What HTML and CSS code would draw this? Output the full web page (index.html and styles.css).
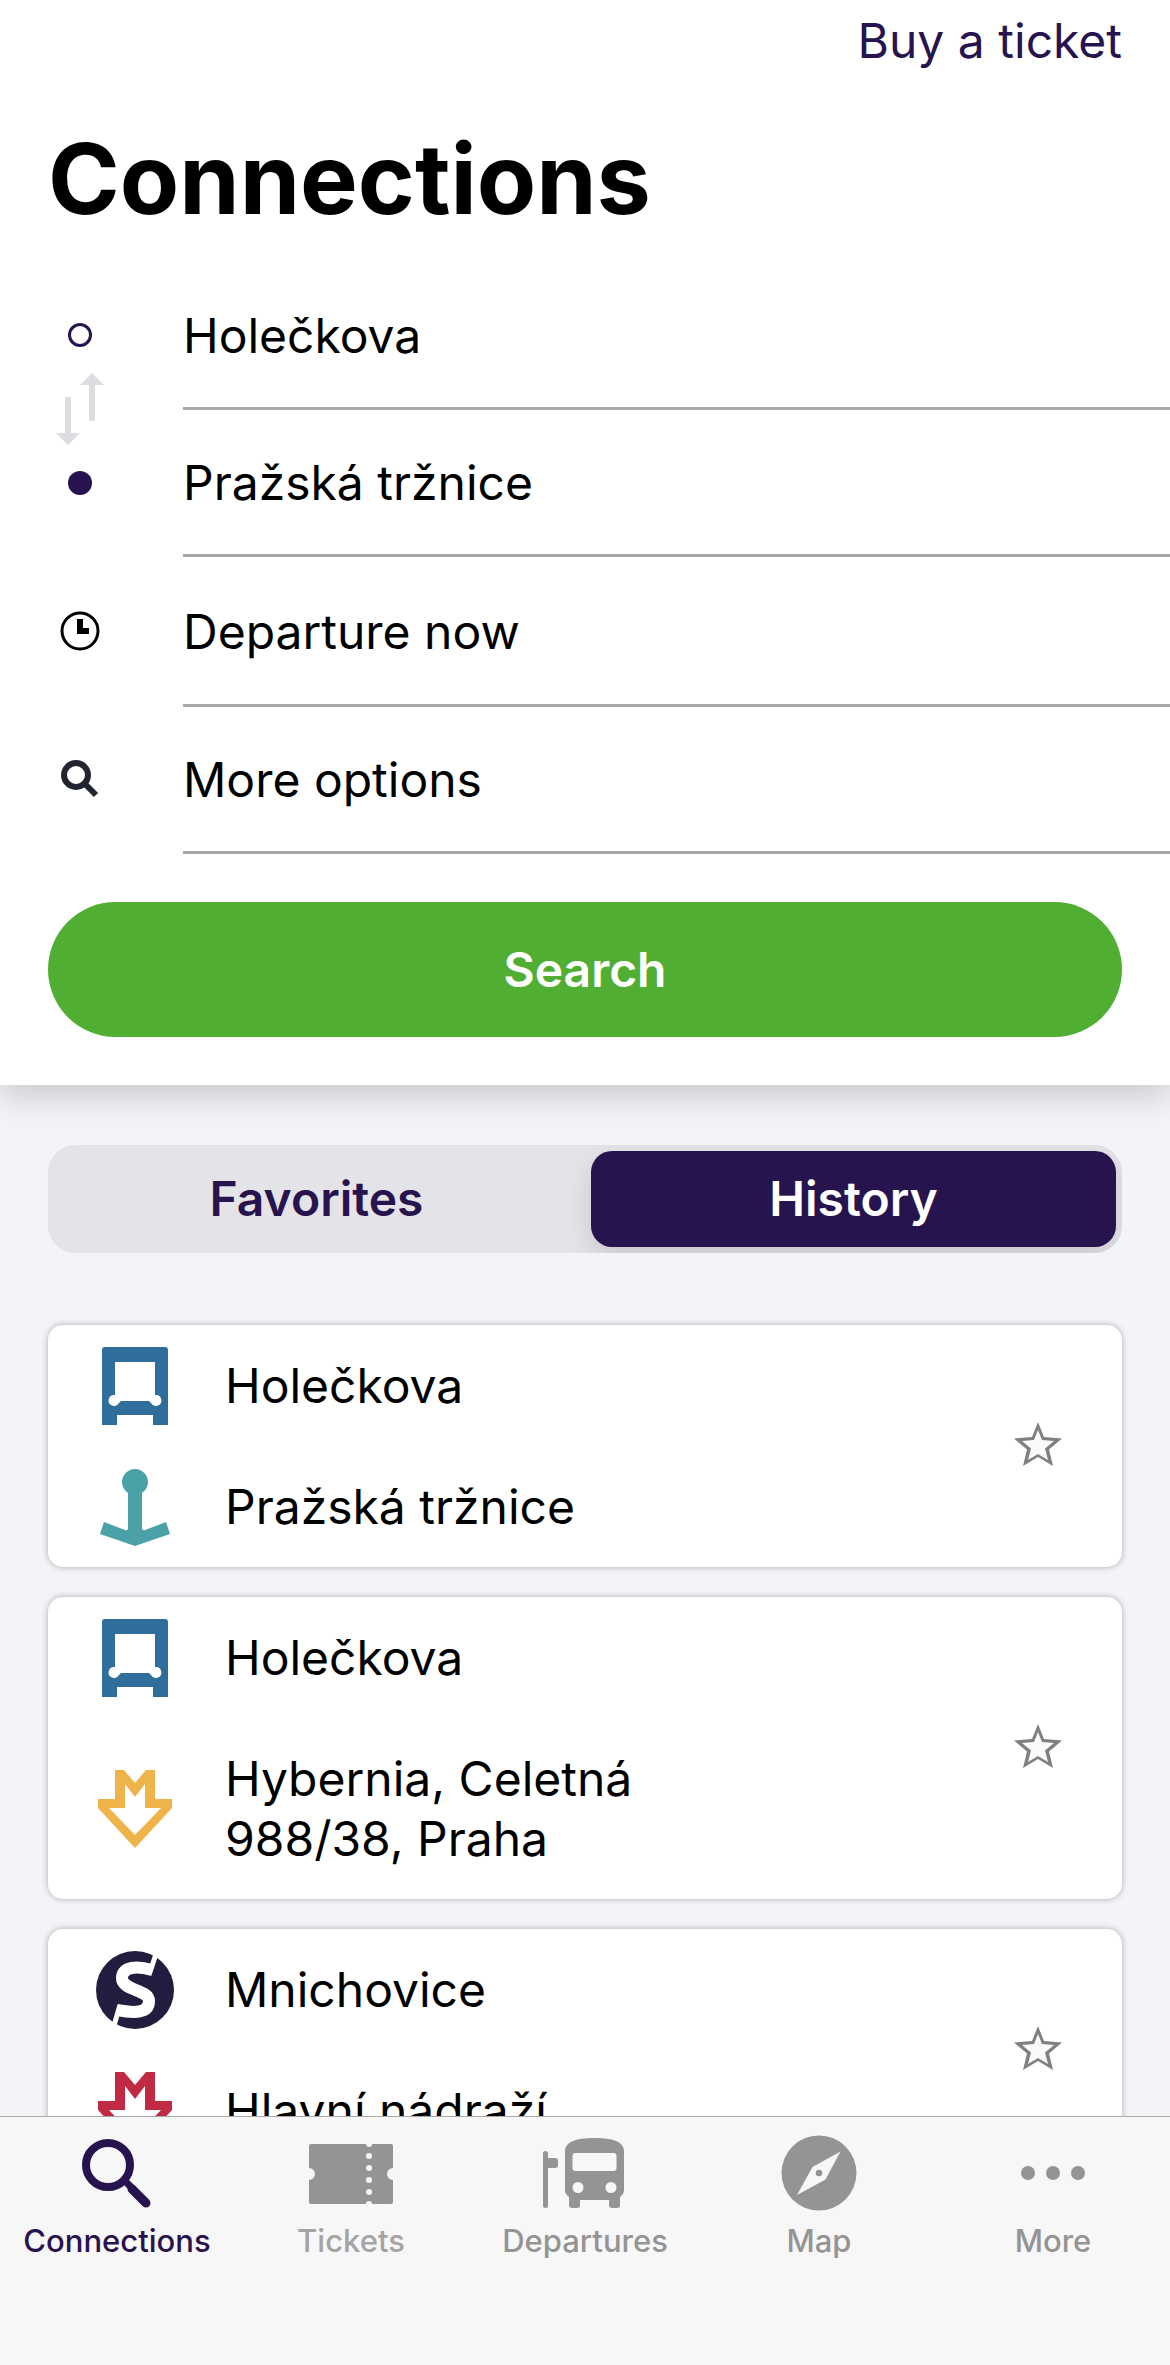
FILE: index.html
```html
<!DOCTYPE html>
<html lang="en">
<head>
  <meta charset="UTF-8">
  <meta name="viewport" content="width=device-width, initial-scale=1">
  <title>Connections</title>
  <link rel="stylesheet" href="styles.css">
</head>
<body>
  <svg class="sprite" aria-hidden="true">
    <symbol id="tram" viewBox="0 0 78 78">
      <path fill="#2f6e9b" fill-rule="evenodd" d="M9 0H69Q72 0 72 3V78H57V68H21V78H6V3Q6 0 9 0ZM19 15V48A5.500 5.500 0 1 0 23 56L25 54H53L55 56A5.500 5.500 0 1 0 59 48V15Z"/>
    </symbol>
    <symbol id="ferry" viewBox="0 0 78 78">
      <path fill="#4aa2a8" d="M32 25A13 13 0 1 1 46 25V60Q46 63 49 62L70 54L74 66L39 78L4 66L8 54L29 62Q32 63 32 60Z"/>
    </symbol>
    <symbol id="metro" viewBox="0 0 78 78">
      <path fill="currentColor" fill-rule="evenodd" d="M19 0H28L39 13L50 0H59V29H76V38L39 78L2 38V29H19ZM29 14V38H13L39 65L65 38H49V14L39 27Z"/>
    </symbol>
    <symbol id="star" viewBox="0 0 48 48">
      <path fill="#808080" d="M24 0L30 15L48 16.500L35 27.500L39 44L24 35L9 44L13 27.500L0 16.500L18 15Z"/>
      <path fill="#fafafa" d="M24 8L20 18L8 19L17 26.500L14 38L24 32L34 38L31 26.500L40 19L28 18Z"/>
    </symbol>
  </svg>

  <main class="content">
    <section class="planner">
      <header class="top">
        <a class="buy" href="#tickets">Buy a ticket</a>
      </header>
      <h1>Connections</h1>

      <div class="fields">
        <div class="marks">
          <svg class="dot" viewBox="0 0 24 24"><circle cx="12" cy="12" r="10.500" fill="none" stroke="#27134e" stroke-width="3"/></svg>
          <button class="swap" type="button" aria-label="Swap stops">
            <svg viewBox="0 0 48 72"><path fill="#dddde1" d="M36 0L48 12H39V48H33V12H24ZM9 24H15V60H24L12 72L0 60H9Z"/></svg>
          </button>
          <svg class="dot" viewBox="0 0 24 24"><circle cx="12" cy="12" r="12" fill="#27134e"/></svg>
        </div>
        <button class="field" type="button">Holečkova</button>
        <button class="field" type="button">Pražská tržnice</button>
        <svg class="mark" viewBox="0 0 40 40"><circle cx="20" cy="20" r="18" fill="none" stroke="#000" stroke-width="3"/><path d="M17 8H23V17H29V23H17Z"/></svg>
        <button class="field time" type="button">Departure now</button>
        <svg class="mark" viewBox="0 0 40 40"><circle cx="16" cy="16" r="12" fill="none" stroke="#222430" stroke-width="6"/><path stroke="#222430" stroke-width="6" d="M24 24L36 36"/></svg>
        <button class="field" type="button">More options</button>
      </div>

      <button class="search" type="button">Search</button>
    </section>

    <div class="segments">
      <button class="segment" type="button">Favorites</button>
      <button class="segment active" type="button">History</button>
    </div>

    <ul class="history">
      <li class="card">
        <div class="stops">
          <p class="stop"><svg><use href="#tram"/></svg>Holečkova</p>
          <p class="stop"><svg><use href="#ferry"/></svg>Pražská tržnice</p>
        </div>
        <button class="fav" type="button" aria-label="Add to favorites"><svg><use href="#star"/></svg></button>
      </li>
      <li class="card">
        <div class="stops">
          <p class="stop"><svg><use href="#tram"/></svg>Holečkova</p>
          <p class="stop line-b"><svg><use href="#metro"/></svg><span>Hybernia, Celetná<br>988/38, Praha</span></p>
        </div>
        <button class="fav" type="button" aria-label="Add to favorites"><svg><use href="#star"/></svg></button>
      </li>
      <li class="card">
        <div class="stops">
          <p class="stop">
            <svg viewBox="0 0 78 78">
              <circle cx="39" cy="39" r="39" fill="#221c3f"/>
              <path fill="none" stroke="#fff" stroke-width="12" d="M56 19C42 15 26 15 26 27C26 40 53 38 53 50C53 63 37 62 21 59"/>
              <path stroke="#fff" stroke-width="5" d="M61 0L53 24M24 54L17 78"/>
            </svg>
            Mnichovice
          </p>
          <p class="stop line-c"><svg><use href="#metro"/></svg>Hlavní nádraží</p>
        </div>
        <button class="fav" type="button" aria-label="Add to favorites"><svg><use href="#star"/></svg></button>
      </li>
    </ul>
  </main>

  <nav class="tabs">
    <a class="tab active" href="#connections">
      <svg viewBox="0 0 84 76"><circle cx="33" cy="30" r="22" fill="none" stroke="currentColor" stroke-width="8"/><path stroke="currentColor" stroke-width="7" d="M50 46L58 54"/><path stroke="currentColor" stroke-width="9" stroke-linecap="round" d="M57 54L71 68"/></svg>
      <span>Connections</span>
    </a>
    <a class="tab" href="#tickets">
      <svg viewBox="0 0 84 76">
        <path fill="currentColor" d="M2 9H57A3 3 0 0 0 63 9H82Q84 9 84 11V33A6 6 0 0 0 84 45V67Q84 69 82 69H63A3 3 0 0 0 57 69H2Q0 69 0 67V45A6 6 0 0 0 0 33V11Q0 9 2 9Z"/>
        <g fill="#f7f7f7"><circle cx="60" cy="21" r="3"/><circle cx="60" cy="33" r="3"/><circle cx="60" cy="45" r="3"/><circle cx="60" cy="57" r="3"/></g>
      </svg>
      <span class="pale">Tickets</span>
    </a>
    <a class="tab" href="#departures">
      <svg viewBox="0 0 84 76">
        <path fill="currentColor" d="M0 18.500A2.500 2.500 0 0 1 5 18.500V23H12Q15 23 15 26V30Q15 33 12 33H5V70.500A2.500 2.500 0 0 1 0 70.500Z"/>
        <path fill="currentColor" d="M22 16Q22 3 51.500 3Q81 3 81 16V55Q81 59 77 62V70Q77 73 74 73H69Q66 73 66 70V65H37V70Q37 73 34 73H29Q26 73 26 70V62Q22 59 22 55Z"/>
        <g fill="#f7f7f7"><rect x="29.500" y="18" width="44" height="18" rx="3"/><circle cx="35" cy="52.500" r="5.500"/><circle cx="68" cy="52.500" r="5.500"/></g>
      </svg>
      <span>Departures</span>
    </a>
    <a class="tab" href="#map">
      <svg viewBox="0 0 84 76"><circle cx="42" cy="38" r="37.500" fill="currentColor"/><path fill="#f7f7f7" d="M63.500 16.500L48.500 44.500L20 60L35.500 32Z"/><circle cx="42" cy="38" r="3.300" fill="currentColor"/></svg>
      <span>Map</span>
    </a>
    <a class="tab" href="#more">
      <svg viewBox="0 0 84 76" fill="currentColor"><circle cx="17" cy="38" r="7"/><circle cx="42" cy="38" r="7"/><circle cx="67" cy="38" r="7"/></svg>
      <span>More</span>
    </a>
  </nav>
</body>
</html>
```

FILE: styles.css
```css
* {
  box-sizing: border-box;
}
body {
  display: flex;
  flex-direction: column;
  height: 100vh;
  margin: 0;
  background: #f3f4f8;
  color: #000;
  font-family: Inter, "Liberation Sans", sans-serif;
  font-size: 48px;
  line-height: 60px;
}
button {
  padding: 0;
  border: 0;
  background: none;
  color: inherit;
  font: inherit;
  cursor: pointer;
}
a {
  color: inherit;
  text-decoration: none;
}
.sprite {
  display: none;
}
.content {
  flex: 1;
  min-height: 0;
  overflow: hidden;
}

/* search form */
.planner {
  padding-bottom: 48px;
  background: #fff;
  box-shadow: 0 12px 30px rgba(0, 0, 0, .17);
}
.top {
  display: flex;
  justify-content: flex-end;
  padding: 11px 48px 0;
}
.buy {
  color: #27134e;
}
h1 {
  margin: 48px 48px 24px;
  font-size: 97px;
  font-weight: 700;
  line-height: 120px;
}
.fields {
  display: grid;
  grid-template-columns: 63px 1fr;
  column-gap: 72px;
  padding-left: 48px;
}
.marks {
  grid-row: span 2;
  display: flex;
  flex-direction: column;
  align-items: center;
  justify-content: center;
  gap: 26px;
  padding-bottom: 3px;
}
.dot {
  width: 24px;
  height: 24px;
}
.swap svg {
  display: block;
  width: 48px;
  height: 72px;
}
.mark {
  align-self: center;
  justify-self: center;
  width: 40px;
  height: 40px;
  margin-bottom: 3px;
}
.field {
  height: 147px;
  padding-top: 2px;
  border-bottom: 3px solid #a8a8a8;
  text-align: left;
}
.field.time {
  height: 150px;
}
.search {
  display: block;
  width: calc(100% - 96px);
  height: 135px;
  margin: 48px auto 0;
  border-radius: 68px;
  background: #50ae32;
  color: #fff;
  font-weight: 600;
}

/* favorites / history switch */
.segments {
  display: flex;
  gap: 12px;
  height: 108px;
  margin: 60px 48px 72px;
  padding: 6px;
  border-radius: 27px;
  background: #e4e3e8;
  overflow: hidden;
}
.segment {
  flex: 1;
  border-radius: 21px;
  color: #27134e;
  font-weight: 600;
}
.segment.active {
  background: #27134e;
  color: #fff;
  box-shadow: 0 9px 24px rgba(0, 0, 0, .12);
}

.history {
  display: grid;
  gap: 30px;
  margin: 0;
  padding: 0 48px;
  list-style: none;
}
.card {
  display: flex;
  align-items: center;
  justify-content: space-between;
  padding: 0 60px 0 48px;
  border-radius: 15px;
  background: #fff;
  box-shadow: 0 0 6px rgba(0, 0, 0, .3);
}
.stop {
  display: flex;
  align-items: center;
  gap: 51px;
  margin: 0;
  padding: 31px 0 30px;
}
.stop svg {
  width: 78px;
  height: 78px;
  margin: -9px 0;
}
.line-b svg {
  color: #efb449;
}
.line-c svg {
  color: #c12a45;
}
.fav svg {
  display: block;
  width: 48px;
  height: 48px;
}

/* bottom navigation */
.tabs {
  display: grid;
  grid-template-columns: repeat(5, 1fr);
  height: 249px;
  border-top: 1px solid #a8a8a8;
  background: #f7f7f7;
  color: #949494;
  font-size: 31px;
  font-weight: 500;
  line-height: 36px;
}
.tab {
  display: flex;
  flex-direction: column;
  align-items: center;
  gap: 12px;
  padding-top: 18px;
}
.tab svg {
  width: 84px;
  height: 76px;
}
.tab.active {
  color: #27134e;
}
.pale {
  color: #a4a4a4;
}
```
